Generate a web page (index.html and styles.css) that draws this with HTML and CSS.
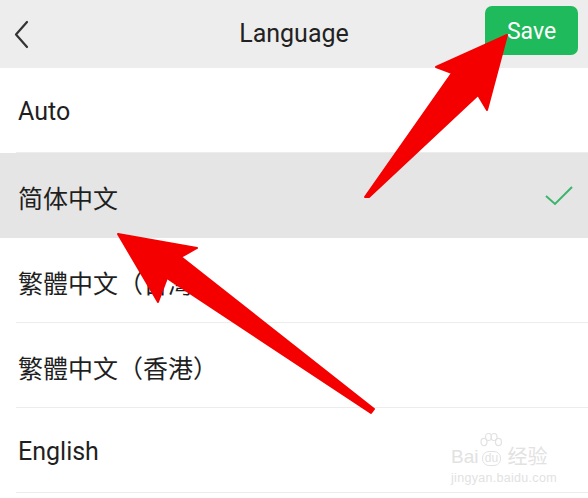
FILE: index.html
```html
<!DOCTYPE html>
<html lang="en">
<head>
    <meta charset="UTF-8">
    <title>Language</title>
    <link rel="stylesheet" href="styles.css">
</head>
<body>
    <div class="screen">
        <header class="topbar">
            <button class="back" type="button" aria-label="Back">
                <svg width="20" height="30" viewBox="0 0 20 30">
                    <polyline points="13,3 2,15.5 13,28" fill="none" stroke="#333" stroke-width="2.2" stroke-linecap="round" stroke-linejoin="round"/>
                </svg>
            </button>
            <h1 class="title">Language</h1>
            <button class="save" type="button">Save</button>
        </header>

        <ul class="langs">
            <li class="lang"><div class="lang-inner">Auto</div></li>
            <li class="lang is-selected">
                <div class="lang-inner">
                    简体中文
                    <svg class="check" width="30" height="22" viewBox="0 0 30 22">
                        <polyline points="2,11 11,19 28,2" fill="none" stroke="#3bb56b" stroke-width="2"/>
                    </svg>
                </div>
            </li>
            <li class="lang"><div class="lang-inner">繁體中文（台灣）</div></li>
            <li class="lang"><div class="lang-inner">繁體中文（香港）</div></li>
            <li class="lang"><div class="lang-inner">English</div></li>
        </ul>

        <div class="watermark">
            <div class="wm-logo">
                <span>Bai</span>
                <span class="wm-paw">
                    <svg width="22" height="18" viewBox="0 0 22 18">
                        <g fill="none" stroke="#e2e2e2" stroke-width="1.2">
                            <ellipse cx="4" cy="9" rx="3" ry="3.6"/>
                            <ellipse cx="8.5" cy="4" rx="3" ry="3.5"/>
                            <ellipse cx="14" cy="4" rx="3" ry="3.5"/>
                            <ellipse cx="18.5" cy="9" rx="3" ry="3.6"/>
                        </g>
                    </svg>
                    <span class="wm-du">du</span>
                </span>
                <span class="wm-cn">经验</span>
            </div>
            <div class="wm-url">jingyan.baidu.com</div>
        </div>

        <svg class="arrows" width="588" height="498" viewBox="0 0 588 498">
            <polygon points="507,35 487,110 478,95 369,197 365,197 452,73 436,67" fill="#f40000" stroke="#f40000" stroke-width="2" stroke-linejoin="round"/>
            <polygon points="118,234 197,248 181,257 374,409 371,413 167,278 158,302" fill="#f40000" stroke="#f40000" stroke-width="2" stroke-linejoin="round"/>
        </svg>
    </div>
</body>
</html>
```

FILE: styles.css
```css
* {
    box-sizing: border-box;
}

body {
    margin: 0;
    background-color: #fff;
    color: #1f1f1f;
    font-family: Roboto, "Noto Sans CJK SC", sans-serif;
}

.screen {
    position: relative;
    width: 588px;
    height: 498px;
    overflow: hidden;
    background-color: #fff;
}

.topbar {
    height: 68px;
    background-color: #ededed;
    display: grid;
    grid-template-columns: 1fr auto 1fr;
    align-items: center;
}

.back {
    justify-self: start;
    margin-left: 14px;
    padding: 0;
    border: none;
    background: none;
    display: flex;
}

.title {
    margin: 0 0 2px;
    font-size: 25px;
    font-weight: 400;
    color: #222;
}

.save {
    justify-self: end;
    align-self: start;
    margin: 6px 10px 0 0;
    width: 93px;
    height: 49px;
    padding: 2px 0 0;
    border: none;
    border-radius: 7px;
    background-color: #1fba5b;
    color: #fff;
    font-family: Roboto, sans-serif;
    font-size: 23px;
}

.langs {
    list-style: none;
    margin: 0;
    padding: 0;
}

.lang {
    padding-left: 16px;
    font-size: 25px;
}

.lang-inner {
    height: 85px;
    padding-left: 2px;
    padding-right: 14px;
    padding-top: 3px;
    border-bottom: 1px solid #ececec;
    display: flex;
    align-items: center;
    justify-content: space-between;
}

.is-selected {
    background-color: #e5e5e5;
}

.is-selected .lang-inner {
    border-bottom-color: #e5e5e5;
}

.check {
    margin-top: -1px;
}

.watermark {
    position: absolute;
    left: 451px;
    top: 433px;
    color: #e2e2e2;
    font-family: "Liberation Sans", sans-serif;
}

.wm-logo {
    display: flex;
    align-items: flex-end;
    gap: 2px;
    font-size: 19px;
    line-height: 1;
}

.wm-paw {
    display: flex;
    flex-direction: column;
    align-items: center;
}

.wm-du {
    font-size: 12px;
    border: 1px solid #e2e2e2;
    border-radius: 7px;
    padding: 0 2px 1px;
}

.wm-cn {
    font-family: "Noto Sans CJK SC", sans-serif;
    font-size: 20px;
    margin-left: 3px;
}

.wm-url {
    margin-top: 5px;
    font-size: 12.5px;
    letter-spacing: 0.3px;
}

.arrows {
    position: absolute;
    left: 0;
    top: 0;
    pointer-events: none;
}
```
